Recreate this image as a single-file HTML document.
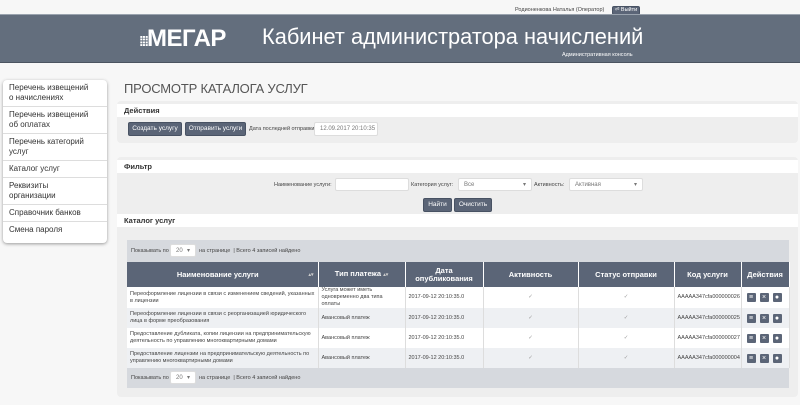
<!DOCTYPE html>
<html><head><meta charset="utf-8"><style>
*{box-sizing:border-box;margin:0;padding:0}
body{width:800px;height:405px;overflow:hidden;background:#f7f7f7;font-family:"Liberation Sans",sans-serif;color:#333;position:relative}
.a{position:absolute;white-space:nowrap}
.hdr{left:0;top:14px;width:800px;height:49px;background:#636e7d;border-top:1px solid #9aa3ae;border-bottom:1px solid #4b5460}
.btn{position:absolute;background:#5b6577;color:#fff;font-size:6.5px;text-align:center;border-radius:2px;border:1px solid #485263;white-space:nowrap}
.side{left:3px;top:80px;width:104px;height:163px;background:#fff;border-radius:4px;box-shadow:0 1px 3px #999}
.side div{font-size:8px;color:#333;padding:3px 18px 3px 6px;border-bottom:1px solid #ddd;line-height:10px}
.panel{background:#eeeeee;border-radius:4px}
.ph{background:#fff;font-size:7.5px;font-weight:bold;padding:2px 7px;color:#333}
.lbl{font-size:5.5px;color:#444}
.inp{position:absolute;background:#fff;border:1px solid #ddd;font-size:6px;color:#777;padding:2px 5px;border-radius:2px;white-space:nowrap;line-height:8px}
table{border-collapse:collapse;position:absolute;left:127px;top:262px;width:662px;table-layout:fixed}
th{background:#5b6577;color:#fff;font-size:7.5px;height:25px;border-right:1px solid #fff;text-align:center;line-height:8px}
td{font-size:5.5px;color:#444;height:20px;padding:0 3px;border-right:1px solid #ddd;line-height:7px;overflow:hidden}
tr.o td{background:#fff}tr.e td{background:#eef0f3}
.ic{display:inline-block;width:9px;height:9px;background:#5b6577;border-radius:1px;margin:0 2px;vertical-align:middle;color:#fff;font-size:7px;line-height:9px;text-align:center}
.ck{text-align:center;color:#999}
</style></head><body>
<div class="a" style="left:515px;top:7px;font-size:5.5px;color:#444">Родионенкова Наталья (Оператор)</div>
<div class="btn" style="left:612px;top:6px;width:28px;height:9px;font-size:5.5px;line-height:7px">⏎ Выйти</div>
<div class="a hdr"></div>
<div class="a" style="left:139px;top:25px;color:#fff;font-size:24px;font-weight:bold;letter-spacing:-0.5px;line-height:28px"><span style="font-size:14px;letter-spacing:-2px">⁞⁞⁞</span>МЕГАР</div>
<div class="a" style="left:262px;top:23px;color:#fff;font-size:21.8px;line-height:28px">Кабинет администратора начислений</div>
<div class="a" style="left:562px;top:52px;color:#fff;font-size:5.5px">Административная консоль</div>
<div class="a side" style="white-space:normal"><div>Перечень извещений о начислениях</div><div>Перечень извещений об оплатах</div><div>Перечень категорий услуг</div><div>Каталог услуг</div><div>Реквизиты организации</div><div>Справочник банков</div><div style="border:0">Смена пароля</div></div>
<div class="a" style="left:124px;top:81px;font-size:13px;color:#555;letter-spacing:-0.2px">ПРОСМОТР КАТАЛОГА УСЛУГ</div>
<div class="a panel" style="left:117px;top:101px;width:681px;height:42px"><div class="ph" style="margin-top:3px">Действия</div></div>
<div class="btn" style="left:128px;top:122px;width:54px;height:14px;line-height:12px">Создать услугу</div>
<div class="btn" style="left:185px;top:122px;width:61px;height:14px;line-height:12px">Отправить услуги</div>
<div class="a lbl" style="left:249px;top:126px">Дата последней отправки:</div>
<div class="inp" style="left:314px;top:122px;width:64px;height:14px">12.09.2017 20:10:35</div>
<div class="a panel" style="left:117px;top:157px;width:681px;height:240px">
<div class="ph" style="margin-top:3px;height:13px">Фильтр</div>
<div style="height:41px"></div>
<div class="ph" style="height:13px">Каталог услуг</div></div>
<div class="a lbl" style="left:274px;top:182px">Наименование услуги:</div>
<div class="inp" style="left:335px;top:178px;width:74px;height:13px"></div>
<div class="a lbl" style="left:411px;top:182px">Категория услуг:</div>
<div class="inp" style="left:458px;top:178px;width:74px;height:13px">Все<span style="float:right">▾</span></div>
<div class="a lbl" style="left:534px;top:182px">Активность:</div>
<div class="inp" style="left:569px;top:178px;width:74px;height:13px">Активная<span style="float:right">▾</span></div>
<div class="btn" style="left:423px;top:198px;width:29px;height:14px;line-height:12px">Найти</div>
<div class="btn" style="left:454px;top:198px;width:38px;height:14px;line-height:12px">Очистить</div>
<div class="a" style="left:127px;top:240px;width:662px;height:148px;background:#d6d9de"></div>
<div class="a lbl" style="left:131px;top:248px">Показывать по</div>
<div class="inp" style="left:170px;top:244px;width:26px;height:13px">20 <span style="float:right">▾</span></div>
<div class="a lbl" style="left:199px;top:248px">на странице &nbsp;| Всего 4 записей найдено</div>
<table>
<tr><th style="width:191px">Наименование услуги <span style="float:right;font-size:5px;color:#ccc;margin-right:4px">▴▾</span></th><th style="width:87px">Тип платежа <span style="font-size:5px;color:#ccc">▴▾</span></th><th style="width:78px">Дата<br>опубликования</th><th style="width:95px">Активность</th><th style="width:96px">Статус отправки</th><th style="width:67px">Код услуги</th><th style="width:48px">Действия</th></tr>
<tr class="o"><td>Переоформление лицензии в связи с изменением сведений, указанных в лицензии</td><td>Услуга может иметь одновременно два типа оплаты</td><td>2017-09-12 20:10:35.0</td><td class="ck">✓</td><td class="ck">✓</td><td>AAAAA347cfa000000026</td><td><span class="ic">≡</span><span class="ic">×</span><span class="ic">●</span></td></tr>
<tr class="e"><td>Переоформление лицензии в связи с реорганизацией юридического лица в форме преобразования</td><td>Авансовый платеж</td><td>2017-09-12 20:10:35.0</td><td class="ck">✓</td><td class="ck">✓</td><td>AAAAA347cfa000000025</td><td><span class="ic">≡</span><span class="ic">×</span><span class="ic">●</span></td></tr>
<tr class="o"><td>Предоставление дубликата, копии лицензии на предпринимательскую деятельность по управлению многоквартирными домами</td><td>Авансовый платеж</td><td>2017-09-12 20:10:35.0</td><td class="ck">✓</td><td class="ck">✓</td><td>AAAAA347cfa000000027</td><td><span class="ic">≡</span><span class="ic">×</span><span class="ic">●</span></td></tr>
<tr class="e"><td>Предоставление лицензии на предпринимательскую деятельность по управлению многоквартирными домами</td><td>Авансовый платеж</td><td>2017-09-12 20:10:35.0</td><td class="ck">✓</td><td class="ck">✓</td><td>AAAAA347cfa000000004</td><td><span class="ic">≡</span><span class="ic">×</span><span class="ic">●</span></td></tr>
</table>
<div class="a lbl" style="left:131px;top:375px">Показывать по</div>
<div class="inp" style="left:170px;top:371px;width:26px;height:13px">20 <span style="float:right">▾</span></div>
<div class="a lbl" style="left:199px;top:375px">на странице &nbsp;| Всего 4 записей найдено</div>
</body></html>
